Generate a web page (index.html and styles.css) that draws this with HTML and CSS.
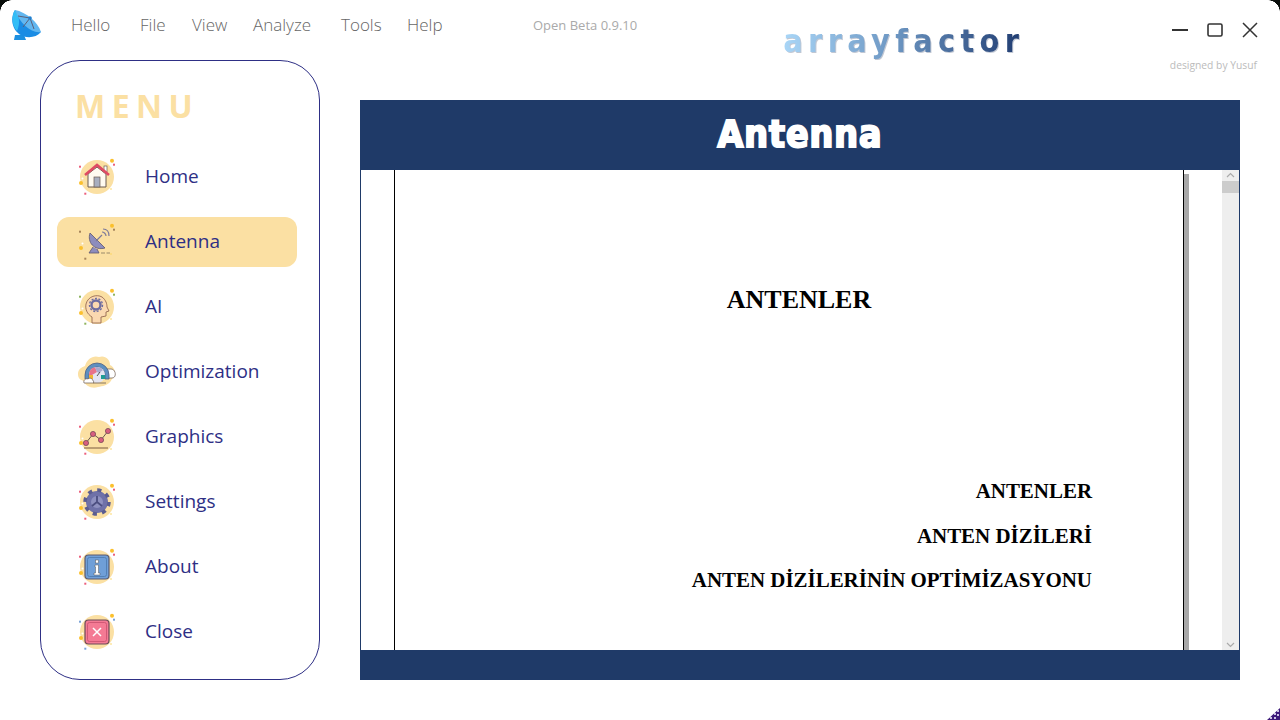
FILE: index.html
```html
<!DOCTYPE html>
<html lang="en">
<head>
    <meta charset="UTF-8">
    <meta name="viewport" content="width=device-width, initial-scale=1.0">
    <title>arrayfactor</title>
    <link rel="stylesheet" href="styles.css">
</head>
<body>
    <svg class="sprite" width="0" height="0">
        <defs>
            <symbol id="sparks" viewBox="0 0 40 40">
                <circle cx="20" cy="20" r="17" fill="#fbe0a3"/>
                <circle cx="35" cy="3.7" r="2" fill="#fbc02d"/>
                <rect x="36" y="6.7" width="2" height="2" fill="currentColor"/>
                <rect x="2" y="8.7" width="2" height="2" fill="currentColor"/>
                <rect x="7.3" y="35.7" width="2" height="2" fill="currentColor"/>
                <circle cx="4" cy="26" r="2" fill="#fbc02d"/>
                <circle cx="34" cy="32" r=".8" fill="#fbd35e"/>
                <circle cx="5.5" cy="21.5" r="1" fill="#fff"/>
            </symbol>
        </defs>
    </svg>

    <div class="topbar">
        <svg class="app-logo" width="30" height="30" viewBox="0 0 30 30">
            <path d="M3 25L2 30H14L12 25Z" fill="#1c8fe0"/>
            <path d="M3 0C-2 8 0 19 7 24C14 29 24 28 29 22Z" fill="#1a8ce4"/>
            <path d="M3 0C-1 7 0 16 5 21C8 14 8 6 3 0Z" fill="#33bdf6"/>
            <path d="M3 0C14 2 26 12 29 22C20 24 8 14 3 0Z" fill="#62b7f0"/>
            <path d="M6 6L18 8M11 17L18 8M18 8L22 19" stroke="#5c5f78" stroke-width="1" fill="none"/>
            <circle cx="18" cy="8" r="1.8" fill="#1f7fd0"/>
        </svg>
        <div class="topmenu">
            <span>Hello</span>
            <span>File</span>
            <span>View</span>
            <span>Analyze</span>
            <span>Tools</span>
            <span>Help</span>
        </div>
        <span class="version">Open Beta 0.9.10</span>
        <span class="brand">arrayfactor</span>
        <div class="winbox">
            <div class="winbtns">
                <svg width="16" height="16" viewBox="0 0 16 16"><path d="M0 8H16" stroke="#333" stroke-width="2"/></svg>
                <svg width="16" height="16" viewBox="0 0 16 16"><rect x="1" y="2" width="14" height="12" rx="1.5" fill="none" stroke="#333" stroke-width="1.6"/></svg>
                <svg width="16" height="16" viewBox="0 0 16 16"><path d="M1 1L15 15M15 1L1 15" stroke="#333" stroke-width="1.5"/></svg>
            </div>
            <span class="credit">designed by Yusuf</span>
        </div>
    </div>

    <div class="main">
        <div class="sidebar">
            <div class="menu-title">MENU</div>
            <div class="nav">
                <div class="nav-item">
                    <svg class="ic ic-pink" viewBox="0 0 40 40">
                        <use href="#sparks"/>
                        <path d="M11 17V30H29V17L20 10Z" fill="#fffaf0" stroke="#6b5a50"/>
                        <rect x="27" y="9" width="3" height="6" fill="#fff" stroke="#6b5a50" stroke-width=".7"/>
                        <path d="M8 18L20 8L32 18" fill="none" stroke="#df4b63" stroke-width="2.6"/>
                        <rect x="17" y="20" width="6" height="10" fill="#a8aebf" stroke="#6b5a50" stroke-width=".7"/>
                    </svg>
                    <span>Home</span>
                </div>
                <div class="nav-item active">
                    <svg class="ic ic-brown" viewBox="0 0 40 40">
                        <use href="#sparks"/>
                        <path d="M13 11C10 20 17 29 28 26Z" fill="#8d8dbd" stroke="#5d5570" stroke-width=".8"/>
                        <path d="M16 25L12 31H22L20 27" fill="#8d8dbd" stroke="#5d5570" stroke-width=".8"/>
                        <path d="M19 19L25 13M25 10C27 10 29 12 29 14M26 7C30 7 32 10 32 14" fill="none" stroke="#7d7a9a" stroke-width="1.2"/>
                        <path d="M24 31H33" stroke="#9a8a6a" stroke-dasharray="4 1.5"/>
                    </svg>
                    <span>Antenna</span>
                </div>
                <div class="nav-item">
                    <svg class="ic ic-green" viewBox="0 0 40 40">
                        <use href="#sparks"/>
                        <path d="M15 36V30C10 27 8 22 9 17C11 9 20 7 25 10C29 13 30 17 30 20L32 24L29 25V29L24 30V36Z" fill="#fbd9b0" stroke="#8a5a48" stroke-width=".8"/>
                        <circle cx="19" cy="18" r="4.5" fill="none" stroke="#6d6da0" stroke-width="2.4"/>
                        <circle cx="19" cy="18" r="6.5" fill="none" stroke="#6d6da0" stroke-width="1.4" stroke-dasharray="2 1.6"/>
                    </svg>
                    <span>AI</span>
                </div>
                <div class="nav-item">
                    <svg class="ic" viewBox="0 0 40 40">
                        <path d="M1 22C1 17 5 15 8 14C10 7 16 3 22 5C28 3 33 7 33 13C38 15 40 23 35 27C32 34 25 34 21 35C15 37 8 34 7 29C3 28 1 26 1 22Z" fill="#fbe0a3"/>
                        <path d="M28 17H34C39 17 40 26 35 26H28Z" fill="#fff" stroke="#6b5a50" stroke-width=".7"/>
                        <path d="M8 27V23A12 12 0 0 1 32 23V27H28V23A8 8 0 0 0 12 23V27Z" fill="#5d8fc0" stroke="#4f5f80" stroke-width=".8"/>
                        <circle cx="20" cy="23" r="8" fill="#e4e5f2"/>
                        <path d="M12 23A8 8 0 0 1 18 15.3L20 20L15 23Z" fill="#e8728a"/>
                        <path d="M18 15.3A8 8 0 0 1 26 18L22 21L20 20Z" fill="#a9a9cf"/>
                        <rect x="12" y="23" width="4" height="4" fill="#f2b632"/>
                        <rect x="24" y="23" width="4" height="4" fill="#1f9c94"/>
                        <path d="M20 24L23 20" stroke="#555" stroke-width="1"/>
                        <path d="M7 31C6 28 9 26 11 27C13 25 16 27 16 29C17 29 17 31 16 31Z" fill="#fff" stroke="#6b5a50" stroke-width=".7"/>
                        <path d="M16 31H29" stroke="#6b5a50" stroke-width=".8"/>
                    </svg>
                    <span>Optimization</span>
                </div>
                <div class="nav-item">
                    <svg class="ic ic-pink" viewBox="0 0 40 40">
                        <use href="#sparks"/>
                        <path d="M9 26L16 17L24 23L31 14" fill="none" stroke="#6b5a50" stroke-width="1"/>
                        <circle cx="9" cy="26" r="2.6" fill="#d85f7f" stroke="#6b4050" stroke-width=".7"/>
                        <circle cx="16" cy="17" r="2.6" fill="#d85f7f" stroke="#6b4050" stroke-width=".7"/>
                        <circle cx="24" cy="23" r="2.6" fill="#d85f7f" stroke="#6b4050" stroke-width=".7"/>
                        <circle cx="31" cy="14" r="2.6" fill="#d85f7f" stroke="#6b4050" stroke-width=".7"/>
                        <path d="M7 31H31" stroke="#7a5a40" stroke-width="1"/>
                    </svg>
                    <span>Graphics</span>
                </div>
                <div class="nav-item">
                    <svg class="ic ic-pink" viewBox="0 0 40 40">
                        <use href="#sparks"/>
                        <circle cx="20" cy="20" r="8.5" fill="#8f91c0" stroke="#6f71a8" stroke-width="5"/>
                        <circle cx="20" cy="20" r="12" fill="none" stroke="#5b5d90" stroke-width="3.5" stroke-dasharray="4.2 5.2"/>
                        <path d="M20 20V14M20 20L15 24M20 20L25 24" stroke="#4c4e80" stroke-width="1.8"/>
                    </svg>
                    <span>Settings</span>
                </div>
                <div class="nav-item">
                    <svg class="ic ic-pink" viewBox="0 0 40 40">
                        <use href="#sparks"/>
                        <rect x="8" y="8" width="24" height="24" rx="3.5" fill="#6f9fd8" stroke="#5a5a70" stroke-width="1.2"/>
                        <rect x="10.5" y="10.5" width="19" height="19" rx="2" fill="none" stroke="#4d78ac" stroke-width=".8"/>
                        <path d="M18 18H21.5V26H23V28H17V26H18.5V20H18Z" fill="#fff" stroke="#555" stroke-width=".5"/>
                        <rect x="18.5" y="13" width="3" height="3" fill="#fff" stroke="#555" stroke-width=".5"/>
                    </svg>
                    <span>About</span>
                </div>
                <div class="nav-item">
                    <svg class="ic ic-blue" viewBox="0 0 40 40">
                        <use href="#sparks"/>
                        <rect x="8" y="8" width="24" height="24" rx="3.5" fill="#f47a94" stroke="#6a4a58" stroke-width="1.2"/>
                        <rect x="10.5" y="10.5" width="19" height="19" rx="2" fill="none" stroke="#c8506e" stroke-width=".8"/>
                        <path d="M16 16L24 24M24 16L16 24" stroke="#fff" stroke-width="1.5"/>
                    </svg>
                    <span>Close</span>
                </div>
            </div>
        </div>

        <div class="panel">
            <div class="panel-head">Antenna</div>
            <div class="panel-body">
                <div class="gutter"></div>
                <div class="page">
                    <h1>ANTENLER</h1>
                    <p>ANTENLER</p>
                    <p>ANTEN DİZİLERİ</p>
                    <p>ANTEN DİZİLERİNİN OPTİMİZASYONU</p>
                </div>
                <div class="page-shadow"></div>
                <div class="page-rest"></div>
                <div class="scroll">
                    <svg width="17" height="10" viewBox="0 0 17 10"><path d="M5 7L8.5 3.5L12 7" fill="none" stroke="#aaa" stroke-width="1.2"/></svg>
                    <div class="thumb"></div>
                    <svg class="scroll-down" width="17" height="10" viewBox="0 0 17 10"><path d="M5 3L8.5 6.5L12 3" fill="none" stroke="#aaa" stroke-width="1.2"/></svg>
                </div>
            </div>
            <div class="panel-foot"></div>
        </div>
    </div>

    <svg class="grip" width="14" height="14" viewBox="0 0 14 14">
        <path d="M14 2V14H1Z" fill="#3d1a7a"/>
        <path d="M11 4H13V6H11ZM8 7H10V9H8ZM11 8H13V10H11ZM4 11H6V13H4ZM8 11H10V13H8Z" fill="#cfc6e6"/>
    </svg>
</body>
</html>
```

FILE: styles.css
```css
html, body{
    margin:0;
    height:720px;
    overflow:hidden;
    background-color:white;
}

body{
    position:relative;
    font-family:"Open Sans", sans-serif;
}

/* black window corners */
body::before, body::after{
    content:"";
    position:absolute;
    top:0;
    width:12px;
    height:12px;
}

body::before{
    left:0;
    background:radial-gradient(circle at 12px 12px, transparent 11.5px, #0a0f0c 12px);
}

body::after{
    right:0;
    background:radial-gradient(circle at 0 12px, transparent 11.5px, #0a0f0c 12px);
}

.sprite{
    display:block;
    height:0;
}

.topbar{
    display:flex;
    height:60px;
    padding-left:12px;
}

.app-logo{
    margin-top:10px;
}

.topmenu{
    display:grid;
    grid-template-columns:69px 52px 61px 88px 66px 60px;
    margin-left:29px;
    padding-top:13px;
    height:24px;
    font-size:17px;
    font-weight:300;
    color:#666;
}

.version{
    margin-left:66px;
    padding-top:16px;
    font-size:13px;
    color:#aaa;
}

.brand{
    margin-left:146px;
    padding-top:23px;
    height:37px;
    font-family:"DejaVu Sans Condensed", "DejaVu Sans", sans-serif;
    font-size:32px;
    font-weight:bold;
    letter-spacing:5.4px;
    line-height:36px;
    background:linear-gradient(90deg, #a9d6f7, #6e98c4 45%, #1f3b70);
    -webkit-background-clip:text;
    background-clip:text;
    color:transparent;
    filter:drop-shadow(1px 1px 0 rgba(50, 70, 110, .3));
}

.winbox{
    margin-left:auto;
    padding-right:23px;
    display:flex;
    flex-direction:column;
    align-items:flex-end;
}

.winbtns{
    display:flex;
    gap:19px;
    padding:22px 0 0;
    margin-right:-1px;
}

.credit{
    margin-top:20px;
    font-size:10.3px;
    color:#bbb;
}

.main{
    display:flex;
    gap:40px;
    padding-left:40px;
}

.sidebar{
    box-sizing:border-box;
    width:280px;
    height:620px;
    border:1px solid #2e2f85;
    border-radius:40px;
    padding:0 16px;
}

.menu-title{
    padding:23px 0 0 18px;
    height:68px;
    font-size:32px;
    font-weight:700;
    letter-spacing:6.5px;
    line-height:44px;
    color:#fbe0a3;
}

.nav{
    display:flex;
    flex-direction:column;
    gap:15px;
}

.nav-item{
    display:flex;
    align-items:center;
    gap:28px;
    box-sizing:border-box;
    width:240px;
    height:50px;
    padding-left:20px;
    border-radius:12px;
    font-size:19px;
    color:#2e2f85;
}

.nav-item span{
    padding-bottom:3px;
}

.nav-item.active{
    background-color:#fbe0a3;
}

.ic{
    flex:none;
    width:40px;
    height:40px;
}

.ic-pink{ color:#ec5f7c; }
.ic-brown{ color:#a5845a; }
.ic-green{ color:#8fb45f; }
.ic-blue{ color:#7aa3d8; }

.panel{
    margin-top:40px;
    width:880px;
}

.panel-head{
    height:70px;
    background-color:#1f3a68;
    color:white;
    text-align:center;
    font-family:"DejaVu Sans Condensed", "DejaVu Sans", sans-serif;
    font-size:37px;
    font-weight:bold;
    letter-spacing:1px;
    line-height:69px;
    -webkit-text-stroke:2px white;
}

.panel-body{
    display:flex;
    box-sizing:border-box;
    height:480px;
    border-left:1px solid #1f3a68;
    border-right:1px solid #1f3a68;
}

.gutter{
    width:33px;
    border-right:1px solid black;
}

.page{
    width:789px;
    border-right:1px solid black;
    padding-top:112px;
    box-sizing:border-box;
    font-family:"Liberation Serif", serif;
    font-weight:bold;
    color:black;
}

.page h1{
    margin:0 0 151px;
    padding-left:20px;
    text-align:center;
    font-size:26px;
    line-height:36px;
}

.page p{
    margin:0;
    padding-right:91px;
    text-align:right;
    font-size:20.95px;
    line-height:44.5px;
}

.page-shadow{
    width:5px;
    margin-top:4px;
    background-color:#a8a8a8;
}

.page-rest{
    flex:1;
}

.scroll{
    display:flex;
    flex-direction:column;
    width:17px;
    background-color:#eee;
}

.thumb{
    height:12px;
    margin-top:1px;
    background-color:#ccc;
}

.scroll-down{
    margin-top:auto;
}

.panel-foot{
    height:30px;
    background-color:#1f3a68;
}

.grip{
    position:absolute;
    right:0;
    bottom:0;
}
```
